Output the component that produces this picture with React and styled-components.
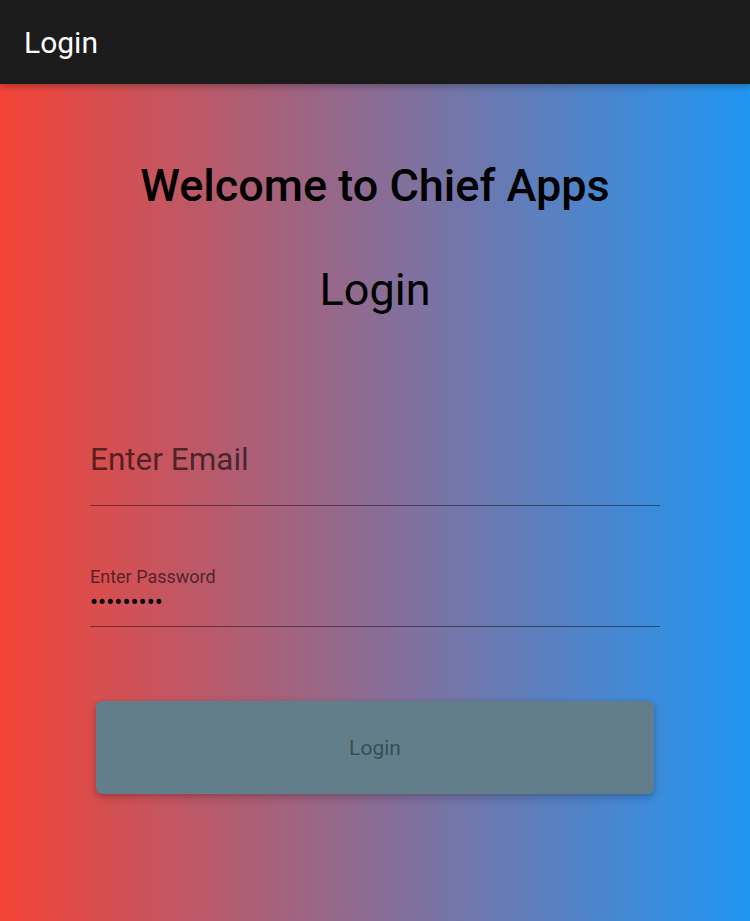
import React from 'react';
import styled, { createGlobalStyle } from 'styled-components';

const GlobalStyle = createGlobalStyle`
  html, body {
    margin: 0;
    padding: 0;
    font-family: Roboto, "Liberation Sans", sans-serif;
  }
`;

const Page = styled.div`
  display: flex;
  flex-direction: column;
  height: 921px;
  overflow: hidden;
`;

const AppBar = styled.header`
  height: 84px;
  flex-shrink: 0;
  display: flex;
  align-items: center;
  padding-left: 24px;
  background: #1c1c1c;
  color: #fff;
  font-size: 30px;
  box-shadow: 0 3px 6px rgba(0, 0, 0, 0.25);
  position: relative;
  z-index: 1;
`;

const Body = styled.main`
  flex: 1;
  background: linear-gradient(to right, #f44336, #2196f3);
  display: flex;
  flex-direction: column;
  align-items: center;
  padding-top: 75px;
`;

const Heading = styled.h1`
  margin: 0;
  font-size: 45px;
  line-height: 54px;
  font-weight: ${p => (p.$bold ? 500 : 400)};
  color: #000;
  text-align: center;
`;

const Form = styled.form`
  width: 570px;
  display: flex;
  flex-direction: column;
  margin-top: 50px;
`;

const Field = styled.div`
  border-bottom: 1.5px solid rgba(0, 0, 0, 0.45);
  padding-top: ${p => p.$top}px;
  padding-bottom: ${p => p.$bottom}px;
`;

const Hint = styled.div`
  font-size: 31.5px;
  line-height: 36px;
  color: rgba(0, 0, 0, 0.6);
`;

const Label = styled.div`
  font-size: 18px;
  line-height: 21px;
  color: rgba(0, 0, 0, 0.6);
`;

const Dots = styled.div`
  margin-top: 3px;
  font-size: 24px;
  line-height: 24px;
  color: #000;
`;

const Button = styled.button`
  margin: 74px 6px 0;
  height: 93px;
  border: none;
  border-radius: 6px;
  background: #627e8b;
  color: #3a4d55;
  font-family: Roboto, "Liberation Sans", sans-serif;
  font-size: 21px;
  box-shadow: 0 4px 10px rgba(0, 0, 0, 0.18), 0 1px 4px rgba(0, 0, 0, 0.12);
`;

export default function App() {
  return (
    <Page>
      <GlobalStyle />
      <AppBar>Login</AppBar>
      <Body>
        <Heading $bold>Welcome to Chief Apps</Heading>
        <Heading style={{ marginTop: 50 }}>Login</Heading>
        <Form onSubmit={e => e.preventDefault()}>
          <Field $top={75} $bottom={27}>
            <Hint>Enter Email</Hint>
          </Field>
          <Field $top={60} $bottom={12}>
            <Label>Enter Password</Label>
            <Dots>•••••••••</Dots>
          </Field>
          <Button type="button">Login</Button>
        </Form>
      </Body>
    </Page>
  );
}
